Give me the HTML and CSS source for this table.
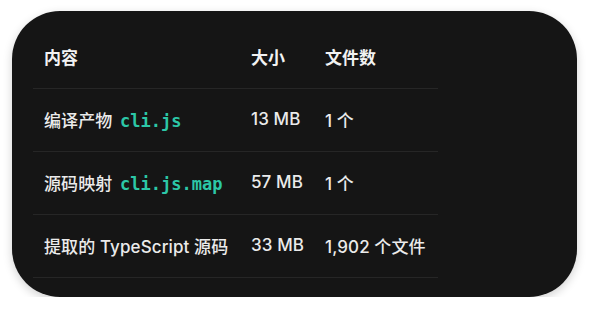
FILE: index.html
```html
<!DOCTYPE html>
<html lang="zh">
<head>
<meta charset="utf-8">
<link rel="stylesheet" href="styles.css">
</head>
<body>
<div class="card">
  <table class="files">
    <colgroup>
      <col class="c1"><col class="c2"><col class="c3">
    </colgroup>
    <thead>
      <tr><th>内容</th><th>大小</th><th>文件数</th></tr>
    </thead>
    <tbody>
      <tr><td>编译产物 <code>cli.js</code></td><td>13 MB</td><td>1 个</td></tr>
      <tr><td>源码映射 <code>cli.js.map</code></td><td>57 MB</td><td>1 个</td></tr>
      <tr><td>提取的 TypeScript 源码</td><td>33 MB</td><td>1,902 个文件</td></tr>
    </tbody>
  </table>
</div>
</body>
</html>
```
FILE: styles.css
```css
html, body {
  margin: 0;
  padding: 0;
  background: #ffffff;
}
body {
  padding: 11px 0 0 12px;
  font-family: Inter, "Noto Sans CJK SC", sans-serif;
}
.card {
  width: 565px;
  height: 286px;
  box-sizing: border-box;
  background: #151515;
  border-radius: 48px;
  box-shadow: 0 3px 10px rgba(0, 0, 0, 0.18);
  padding: 15px 0 0 21px;
}
.files {
  border-collapse: collapse;
  table-layout: fixed;
  width: 405px;
}
.c1 { width: 207px; }
.c2 { width: 74px; }
.c3 { width: 124px; }
.files th, .files td {
  text-align: left;
  padding: 0 0 2px 11px;
  height: 60px;
  border-bottom: 1px solid #262626;
  white-space: nowrap;
  font-size: 17px;
}
.files th {
  font-weight: 600;
  color: #f2f2f2;
}
.files td {
  font-weight: 500;
  color: #ebebeb;
  letter-spacing: 0.1px;
}
.files code {
  font-family: "DejaVu Sans Mono", monospace;
  font-weight: 700;
  font-size: 17px;
  letter-spacing: 0;
  margin-left: 3px;
  color: #2cc7a7;
}
```
